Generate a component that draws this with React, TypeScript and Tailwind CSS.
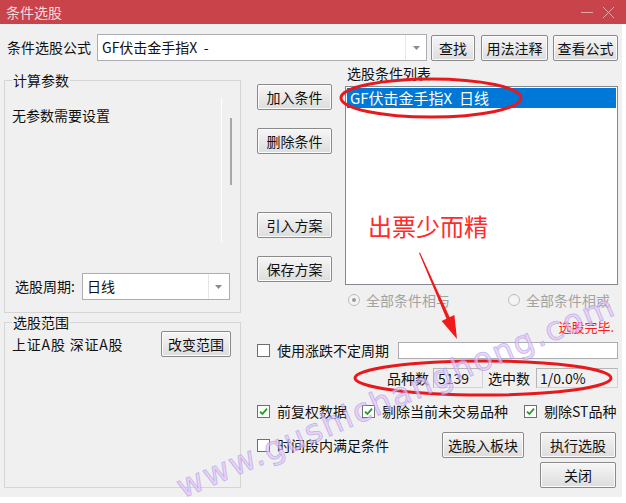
import React from "react";
import clsx from "clsx";

const ui = "font-['Microsoft_YaHei','Noto_Sans_CJK_SC',sans-serif]";

function Btn({ children, className }: { children: React.ReactNode; className?: string }) {
  return (
    <button
      className={clsx(
        "flex h-[26px] shrink-0 items-center justify-center rounded-[2px] border border-[#8a8a8a] bg-linear-to-b from-[#f6f6f6] to-[#dddddd] text-[14px] leading-none text-[#111] shadow-[inset_0_0_0_1px_#fbfbfb]",
        className
      )}
    >
      {children}
    </button>
  );
}

function Combo({ text, className }: { text: string; className?: string }) {
  return (
    <div className={clsx("flex h-[27px] border border-[#abadb3] bg-white", className)}>
      <div className="flex flex-1 items-center whitespace-pre pl-[4px] text-[14px] text-[#111]">{text}</div>
      <div className="flex w-[21px] items-center justify-center border-l border-[#e6e6e6]">
        <svg width="7" height="4" viewBox="0 0 7 4">
          <path d="M0 0 H7 L3.5 4 Z" fill="#8c8c8c" />
        </svg>
      </div>
    </div>
  );
}

function Check({ checked, label }: { checked?: boolean; label: string }) {
  return (
    <div className="flex items-center gap-[7px]">
      <span className="flex h-[13px] w-[13px] shrink-0 items-center justify-center border border-[#6f6f6f] bg-white">
        {checked && (
          <svg width="9" height="9" viewBox="0 0 9 9">
            <path d="M1 4.6 L3.4 7 L8 1.6" stroke="#1f9e1f" strokeWidth="1.8" fill="none" />
          </svg>
        )}
      </span>
      <span className="whitespace-nowrap text-[14px] text-[#111]">{label}</span>
    </div>
  );
}

function Radio({ checked, label }: { checked?: boolean; label: string }) {
  return (
    <div className="flex items-center gap-[6px]">
      <span className="flex h-[12px] w-[12px] items-center justify-center rounded-full border border-[#bcbcbc] bg-[#f4f4f4]">
        {checked && <span className="h-[4px] w-[4px] rounded-full bg-[#9a9a9a]" />}
      </span>
      <span className="text-[14px] text-[#a3a3a3]">{label}</span>
    </div>
  );
}

function Group({ title, className, children }: { title: string; className?: string; children: React.ReactNode }) {
  return (
    <fieldset className={clsx("border border-[#d5d5d5]", className)}>
      <legend className="ml-[7px] px-[1px] text-[14px] leading-[18px] text-[#111]">{title}</legend>
      {children}
    </fieldset>
  );
}

export default function App() {
  return (
    <div className={clsx("relative h-[503px] w-[626px] overflow-hidden bg-white", ui)}>
      {/* title bar */}
      <div className="flex h-[24px] w-[626px] items-center bg-[#c9434a] pl-[6px]">
        <span className="text-[14px] text-[#f7dcdd]">条件选股</span>
        <div className="ml-auto mr-[11px] flex items-center gap-[9px]">
          <svg width="12" height="12" viewBox="0 0 12 12">
            <path d="M0 6.5 H12" stroke="#eaa7aa" strokeWidth="1" />
          </svg>
          <svg width="13" height="13" viewBox="0 0 13 13">
            <path d="M1 1 L12 12 M12 1 L1 12" stroke="#eaa7aa" strokeWidth="1" />
          </svg>
        </div>
      </div>

      <div className="flex h-[473px] w-[622px] flex-col bg-[#f0f0f0]">
        {/* formula row */}
        <div className="mt-[10px] flex h-[27px] items-center pl-[7px]">
          <span className="text-[14px] text-[#111]">条件选股公式</span>
          <Combo text="GF伏击金手指X  -" className="ml-[6px] w-[330px]" />
          <Btn className="ml-[4px] w-[44px]">查找</Btn>
          <Btn className="ml-[6px] w-[67px]">用法注释</Btn>
          <Btn className="ml-[5px] w-[65px]">查看公式</Btn>
        </div>

        <div className="mt-[5px] flex">
          {/* left column */}
          <div className="ml-[4px] flex w-[237px] flex-col">
            <Group title="计算参数" className="mt-[5px] h-[242px]">
              <div className="mt-[9px] flex h-[144px]">
                <div className="flex-1 pl-[7px] pt-[7px] text-[14px] leading-[20px] text-[#111]">无参数需要设置</div>
                <div className="w-[19px] border-l border-white">
                  <div className="ml-[8px] mt-[20px] h-[67px] w-[2px] bg-[#a8a8a8]" />
                </div>
              </div>
              <div className="mt-[31px] flex h-[27px] items-center pl-[10px]">
                <span className="text-[14px] text-[#111]">选股周期:</span>
                <Combo text="日线" className="ml-[7px] w-[148px]" />
              </div>
            </Group>
            <Group title="选股范围" className="h-[175px]">
              <div className="mt-[1px] flex h-[24px] items-center pl-[7px]">
                <span className="text-[14px] tracking-[0.8px] text-[#111]">上证A股 深证A股</span>
                <Btn className="ml-auto mr-[9px] h-[24px] w-[70px]">改变范围</Btn>
              </div>
            </Group>
          </div>

          {/* right part */}
          <div className="flex w-[377px] flex-col">
            <div className="flex">
              <div className="ml-[16px] flex w-[75px] flex-col">
                <Btn className="mt-[18px] w-[75px]">加入条件</Btn>
                <Btn className="mt-[18px] w-[75px]">删除条件</Btn>
                <Btn className="mt-[58px] w-[75px]">引入方案</Btn>
                <Btn className="mt-[18px] w-[75px]">保存方案</Btn>
              </div>
              <div className="ml-[13px] flex w-[273px] flex-col">
                <div className="pl-[2px] text-[14px] leading-[14px] text-[#111]">选股条件列表</div>
                <div className="mt-[6px] h-[199px] border border-[#828790] bg-white p-[1px]">
                  <div className="flex h-[20px] items-center whitespace-pre bg-[#0078d7] pl-[3px] text-[15px] text-white">
                    GF伏击金手指X  日线
                  </div>
                </div>
                <div className="mt-[5px] flex h-[20px] items-center pl-[3px]">
                  <div className="w-[160px]">
                    <Radio checked label="全部条件相与" />
                  </div>
                  <Radio label="全部条件相或" />
                </div>
                <div className="mt-[8px] flex h-[18px] items-center justify-end pr-[4px] text-[13px] text-[#ff1a1a]">
                  选股完毕.
                </div>
              </div>
            </div>

            <div className="mt-[5px] flex h-[18px] items-center pl-[16px]">
              <Check label="使用涨跌不定周期" />
              <div className="ml-auto h-[17px] w-[220px] border border-[#abadb3] bg-white" />
            </div>

            <div className="mt-[9px] flex h-[20px] items-center justify-end text-[14px] text-[#111]">
              <span>品种数</span>
              <div className="ml-[4px] flex h-[20px] w-[50px] items-center border border-[#d3d3d3] border-l-[#b5b5b5] border-t-[#b5b5b5] pl-[4px]">5139</div>
              <span className="ml-[5px]">选中数</span>
              <div className="ml-[6px] flex h-[20px] w-[82px] items-center border border-[#d3d3d3] border-l-[#b5b5b5] border-t-[#b5b5b5] pl-[3px]">1/0.0%</div>
            </div>

            <div className="mt-[14px] flex h-[18px] items-center pl-[16px]">
              <div className="w-[105px]">
                <Check checked label="前复权数据" />
              </div>
              <div className="w-[162px]">
                <Check checked label="剔除当前未交易品种" />
              </div>
              <Check checked label="剔除ST品种" />
            </div>

            <div className="mt-[12px] flex h-[26px] items-center pl-[16px]">
              <Check label="时间段内满足条件" />
              <Btn className="ml-auto w-[82px]">选股入板块</Btn>
              <Btn className="ml-[16px] mr-[2px] w-[76px]">执行选股</Btn>
            </div>
            <div className="mt-[4px] flex h-[26px] justify-end">
              <Btn className="mr-[2px] w-[76px]">关闭</Btn>
            </div>
          </div>
        </div>
      </div>

      {/* annotations */}
      <div className="absolute left-[368px] top-[211px] text-[24px] leading-[30px] text-[#ff2b2b]">出票少而精</div>
      <svg className="pointer-events-none absolute left-0 top-0" width="626" height="503" viewBox="0 0 626 503">
        <ellipse cx="431" cy="98" rx="90" ry="19" fill="none" stroke="#e8191d" strokeWidth="3" />
        <ellipse cx="483" cy="378" rx="128" ry="17" fill="none" stroke="#e8191d" strokeWidth="3" />
        <polygon points="419,253 420,252.5 450,318 447,320" fill="#f01a1a" />
        <polygon points="457,339 441.6,320.9 454.4,315.1" fill="#f01a1a" />
      </svg>
      <div className="pointer-events-none absolute left-[396px] top-[396px] -translate-x-1/2 -translate-y-1/2 -rotate-[23deg] whitespace-nowrap font-['DejaVu_Sans',sans-serif] text-[32px] font-normal tracking-[2px] text-[#f6c4ee] opacity-70 [-webkit-text-stroke:0.8px_#9c9cf4]">
        www.gushichanghong.com
      </div>
    </div>
  );
}
